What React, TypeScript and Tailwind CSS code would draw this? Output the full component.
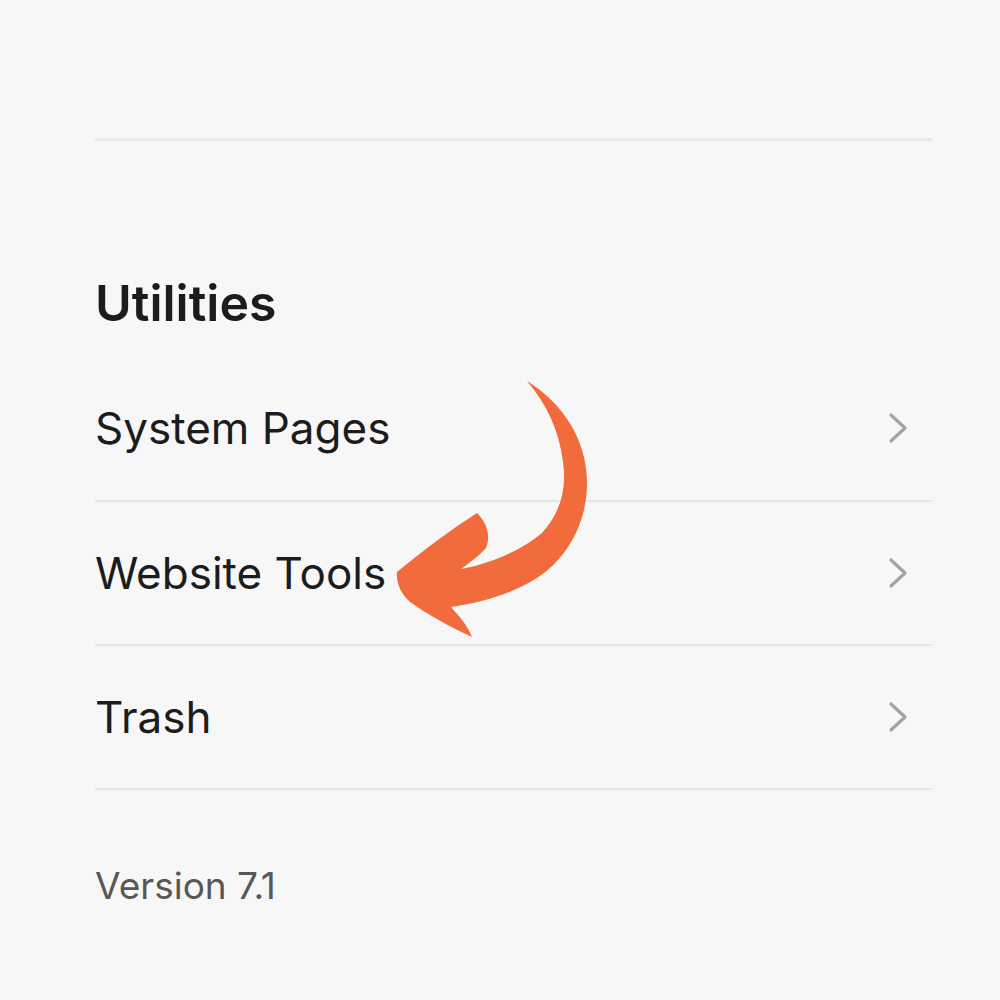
const rows = ['System Pages', 'Website Tools', 'Trash'];

function Chevron() {
  return (
    <svg width="24" height="32" viewBox="0 0 24 32" fill="none" className="mr-[22px]">
      <path d="M5 3 L19 16 L5 29" stroke="#a3a3a3" strokeWidth="3.2" strokeLinecap="round" strokeLinejoin="round" />
    </svg>
  );
}

export default function App() {
  return (
    <div className="relative min-h-screen bg-[#f7f7f7] pl-[95px] pr-[68px] pt-[138px] font-['Inter','Liberation_Sans',sans-serif] text-[#1c1c1c]">
      <div className="h-[3px] bg-[#e9e9e9]" />

      <h2 className="mt-[137px] text-[50px] font-semibold leading-[50px]">Utilities</h2>

      <div className="mt-[28px]">
        {rows.map((label, i) => (
          <div key={label} className={`flex h-[144px] items-center justify-between ${i > 0 ? 'border-t-[2px] border-[#e6e6e6]' : ''}`}>
            <span className="text-[44px] leading-none">{label}</span>
            <Chevron />
          </div>
        ))}
        <div className="h-[2px] bg-[#e6e6e6]" />
      </div>

      <p className="mt-[77px] text-[37px] leading-none text-[#575757]">Version 7.1</p>

      {/* annotation arrow */}
      <svg className="pointer-events-none absolute left-0 top-0" width="1000" height="1000" viewBox="0 0 1000 1000">
        <path
          fill="#f26b3d"
          d="M527,381 C564,404 586,440 587,480 C588,522 567,561 532,581 C506,596 478,603 451,607 C459,616 468,626 472,637 C450,627 427,614 410,602 C401,594 396,583 397,572 C420,553 450,530 477,513 C487,523 491,536 486,548 C479,556 470,562 461,569 C492,563 522,550 542,533 C560,513 567,490 563,462 C559,430 547,405 527,381 Z"
        />
      </svg>
    </div>
  );
}
